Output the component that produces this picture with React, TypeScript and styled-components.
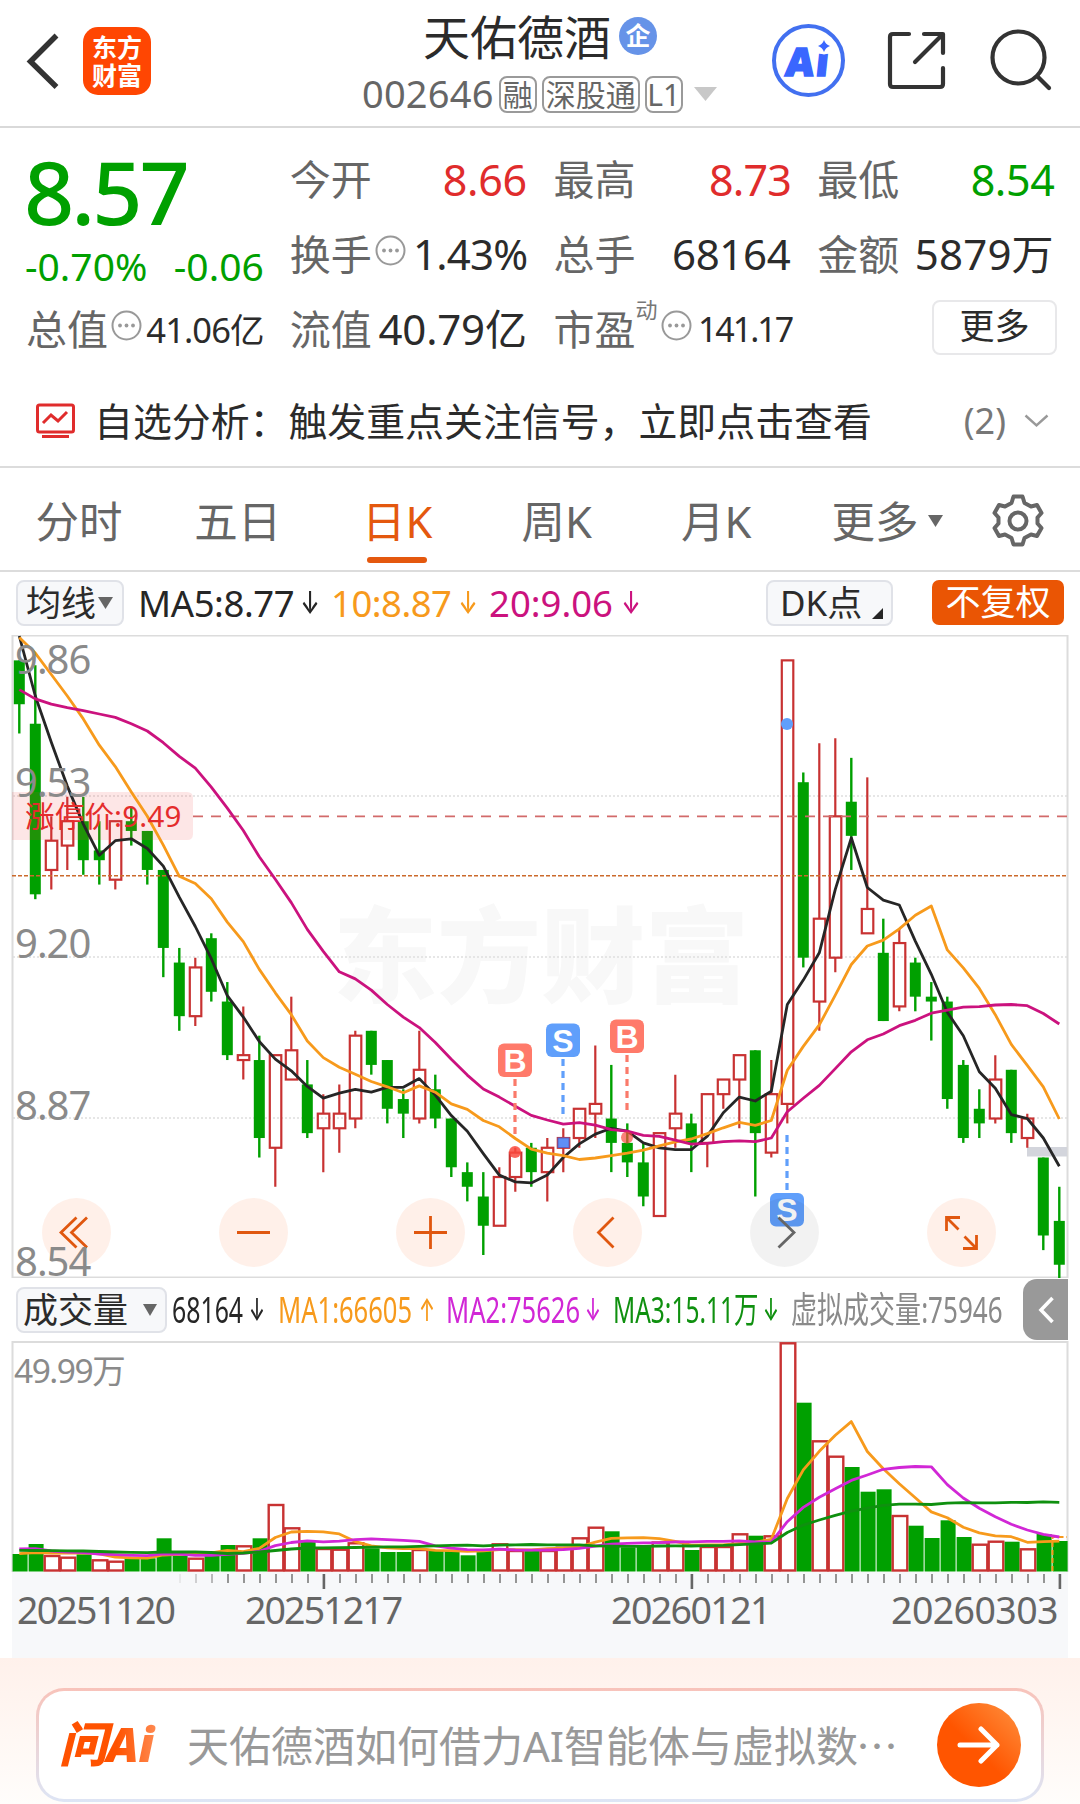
import React from "react";
import styled, { createGlobalStyle } from "styled-components";

const FONT = `"Noto Sans", "Noto Sans CJK SC", sans-serif`;
const UP = "#c83232";
const DOWN = "#00a000";
const ORANGE = "#f79a1c";

const GlobalStyle = createGlobalStyle`
  * { box-sizing: border-box; }
  body { margin: 0; background: #fff; font-family: ${FONT}; color: #2b2b2b; }
`;

const Page = styled.div`
  width: 1080px;
  height: 1804px;
  overflow: hidden;
  display: flex;
  flex-direction: column;
  background: #fff;
`;

type TextProps = { $size: number; $color?: string; $ls?: number; $weight?: number };
const Text = styled.span<TextProps>`
  font-size: ${(p) => p.$size}px;
  line-height: 1.2;
  color: ${(p) => p.$color ?? "#2b2b2b"};
  letter-spacing: ${(p) => p.$ls ?? 0}px;
  margin-right: ${(p) => p.$ls ?? 0}px;
  font-weight: ${(p) => p.$weight ?? 400};
  white-space: nowrap;
`;

/* ---------- header ---------- */
const Header = styled.header`
  height: 128px;
  flex: none;
  display: flex;
  border-bottom: 2px solid #d9d9d9;
`;
const HeaderLeft = styled.div`
  width: 362px;
  height: 121px;
  padding-left: 25px;
  display: flex;
  align-items: center;
  gap: 22px;
`;
const AppLogo = styled.div`
  width: 68px;
  height: 68px;
  border-radius: 15px;
  background: #ff4602;
  color: #fff;
  font-size: 25px;
  font-weight: 700;
  line-height: 28px;
  display: flex;
  flex-direction: column;
  align-items: center;
  justify-content: center;
`;
const HeaderCenter = styled.div`
  width: 356px;
  display: flex;
  flex-direction: column;
  align-items: center;
`;
const TitleRow = styled.div`
  height: 74px;
  display: flex;
  align-items: center;
  gap: 8px;
`;
const Badge = styled.div`
  width: 38px;
  height: 38px;
  margin-top: -2px;
  border-radius: 50%;
  background: #6693e8;
  color: #fff;
  font-size: 25px;
  font-weight: 700;
  line-height: 36px;
  text-align: center;
`;
const CodeRow = styled.div`
  height: 40px;
  width: 100%;
  display: flex;
  align-items: center;
  gap: 5px;
`;
const Tag = styled.div<{ $w: number }>`
  width: ${(p) => p.$w}px;
  height: 37px;
  border: 2px solid #9a9a9a;
  border-radius: 8px;
  display: flex;
  align-items: center;
  justify-content: center;
  font-size: 30px;
  line-height: 33px;
  color: #666;
`;
const HeaderRight = styled.div`
  flex: 1;
  display: flex;
  align-items: center;
  height: 121px;
  padding-left: 54px;
`;
const AiRing = styled.div`
  position: relative;
  width: 73px;
  height: 73px;
  border: 4px solid #4270f0;
  border-radius: 50%;
  display: flex;
  align-items: center;
  justify-content: center;
  font-size: 39px;
  font-weight: 900;
  letter-spacing: 2px;
  line-height: 60px;
  color: #3a66ff;
  -webkit-text-stroke: 1.5px #3a66ff;
`;
const AiWord = styled.span`
  transform: skewX(-6deg);
`;
const AiStar = styled.svg`
  position: absolute;
  left: 39px;
  top: 9px;
`;

/* ---------- quote ---------- */
const Quote = styled.section`
  height: 239px;
  flex: none;
  padding: 14px 26px 0;
  display: grid;
  grid-template-columns: repeat(4, 1fr);
  grid-template-rows: repeat(3, 75px);
  column-gap: 27px;
`;
const PriceBlock = styled.div`
  grid-row: span 2;
  display: flex;
  flex-direction: column;
`;
const Price = styled.div`
  height: 100px;
  margin-left: -2px;
  font-size: 88px;
  font-weight: 500;
  letter-spacing: -3px;
  line-height: 98px;
  color: ${DOWN};
`;
const Change = styled.div`
  height: 48px;
  margin: 0 -1px;
  display: flex;
  justify-content: space-between;
  align-items: center;
`;
const Cell = styled.div`
  display: flex;
  align-items: center;
  justify-content: space-between;
`;
const CellLabel = styled.div`
  display: flex;
  align-items: center;
`;
const InfoIcon = styled.svg`
  margin: -9px 0 0 3px;
`;
const Sup = styled.span`
  font-size: 22px;
  color: #777;
  width: 22px;
  height: 64px;
  line-height: 22px;
  text-align: right;
`;
const MoreCell = styled.div`
  display: flex;
  align-items: center;
  justify-content: flex-end;
`;
const MoreButton = styled.button`
  width: 125px;
  height: 55px;
  margin: -4px -3px 0 0;
  padding: 0 0 4px;
  border: 2px solid #e8e8ea;
  border-radius: 8px;
  background: #fff;
  font: 35px/44px ${FONT};
  color: #2b2b2b;
`;

/* ---------- analysis alert ---------- */
const Alert = styled.section`
  height: 101px;
  flex: none;
  padding: 9px 31px 0 36px;
  border-bottom: 2px solid #dcdcdc;
  display: flex;
  align-items: center;
`;
const AlertText = styled.div`
  flex: 1;
  margin-left: 18px;
  font-size: 38.9px;
  line-height: 50px;
  white-space: nowrap;
`;

/* ---------- tabs ---------- */
const Tabs = styled.nav`
  height: 104px;
  flex: none;
  display: flex;
  border-bottom: 2px solid #dcdcdc;
`;
const Tab = styled.div<{ $active?: boolean; $w?: number }>`
  width: ${(p) => p.$w ?? 159.5}px;
  padding-top: 26px;
  display: flex;
  flex-direction: column;
  align-items: center;
  font-size: 43.5px;
  line-height: 54px;
  color: ${(p) => (p.$active ? "#e4580e" : "#666")};
`;
const TabLabel = styled.div`
  display: flex;
  align-items: center;
  gap: 9px;
`;
const TabBar = styled.div`
  width: 60px;
  height: 6px;
  margin-top: 9px;
  border-radius: 3px;
  background: #e4580e;
`;

/* ---------- indicator row ---------- */
const MaRow = styled.div`
  height: 63px;
  flex: none;
  padding: 0 16px 2px;
  display: flex;
  align-items: center;
`;
const Chip = styled.div<{ $w: number; $pl?: number }>`
  width: ${(p) => p.$w}px;
  height: 46px;
  padding-left: ${(p) => p.$pl ?? 8}px;
  border: 2px solid #e0e2e8;
  border-radius: 8px;
  background: #f7f8fa;
  display: flex;
  align-items: center;
  font-size: 35px;
  line-height: 42px;
  white-space: nowrap;
`;
const Gap = styled.span<{ $w: number }>`
  width: ${(p) => p.$w}px;
`;
const Corner = styled.svg`
  align-self: flex-end;
  margin: 0 0 5px 10px;
`;
const Ma = styled.div<{ $color: string; $w: number; $ml: number; $ls?: number }>`
  width: ${(p) => p.$w}px;
  margin-left: ${(p) => p.$ml}px;
  display: flex;
  align-items: center;
  justify-content: space-between;
  font-size: 36.5px;
  line-height: 46px;
  letter-spacing: ${(p) => p.$ls ?? 0}px;
  color: ${(p) => p.$color};
  white-space: nowrap;
`;
const Arrow = styled.span<{ $sx?: number }>`
  width: 14px;
  display: flex;
  justify-content: center;
  font: 500 31px/46px "Inter", "DejaVu Sans", sans-serif;
  letter-spacing: 0;
  transform: scaleX(${(p) => p.$sx ?? 0.72});
`;
const Spacer = styled.div`
  flex: 1;
`;
const Adjust = styled.div`
  width: 132px;
  height: 45px;
  margin-left: 39px;
  border-radius: 7px;
  background: #ea5504;
  color: #fff;
  font-size: 35px;
  line-height: 43px;
  text-align: center;
`;

const Chart = styled.svg`
  display: block;
  flex: none;
`;

/* ---------- volume header ---------- */
const VolRow = styled.div`
  height: 63px;
  flex: none;
  padding: 0 12px 0 16px;
  display: flex;
  align-items: center;
`;
const VolItem = styled.div<{ $color: string; $w: number; $ml: number }>`
  width: ${(p) => p.$w}px;
  margin-left: ${(p) => p.$ml}px;
  display: flex;
  justify-content: space-between;
  align-items: center;
  color: ${(p) => p.$color};
`;
const Condensed = styled.span<{ $sx: number }>`
  display: block;
  width: 0;
  font-size: 36px;
  line-height: 46px;
  white-space: nowrap;
  transform: scaleX(${(p) => p.$sx});
  transform-origin: left center;
`;
const Handle = styled.div`
  width: 45px;
  height: 61px;
  border-radius: 14px 0 0 14px;
  background: #999;
  display: flex;
  align-items: center;
  justify-content: center;
`;

/* ---------- time axis ---------- */
const Axis = styled.div`
  height: 86px;
  flex: none;
  margin: 0 12px;
  background: #f7f8fa;
`;
const Dates = styled.div`
  display: flex;
  padding: 0 8px 0 5px;
  margin-top: -9px;
`;
const DateText = styled.span<{ $ml: number; $w: number; $ls: number }>`
  width: ${(p) => p.$w}px;
  margin-left: ${(p) => p.$ml}px;
  font-size: 37.5px;
  line-height: 46px;
  letter-spacing: ${(p) => p.$ls}px;
  color: #666;
`;

/* ---------- ask bar ---------- */
const AskArea = styled.footer`
  flex: 1;
  padding: 30px 36px 0;
  background: linear-gradient(#fff1eb, #fffdfb);
`;
const AskCard = styled.div`
  height: 114px;
  border: 3px solid transparent;
  border-radius: 28px;
  background: linear-gradient(#fff, #fff) padding-box, linear-gradient(#f8c3ba, #dde5f5) border-box;
  padding: 0 20px;
  display: flex;
  align-items: center;
`;
const AskLogo = styled.div`
  width: 128px;
  margin-top: -2px;
  font-size: 48px;
  font-weight: 900;
  font-style: italic;
  letter-spacing: -0.5px;
  line-height: 60px;
  white-space: nowrap;
  color: transparent;
  background: linear-gradient(90deg, #ff5200 45%, #ff8d55 78%);
  background-clip: text;
  -webkit-background-clip: text;
`;
const AskText = styled.div`
  flex: 1;
  font-size: 42px;
  line-height: 56px;
  color: #999;
  white-space: nowrap;
`;
const Dots = styled.span`
  display: inline-block;
  margin-left: -2px;
  font-family: "Noto Sans CJK SC", sans-serif;
`;
const Go = styled.div`
  width: 84px;
  height: 84px;
  border-radius: 50%;
  background: linear-gradient(45deg, #ff5500 45%, #ff9240);
  display: flex;
  align-items: center;
  justify-content: center;
`;

/* ---------- data ---------- */
// [kind, body top, body bottom, high, low] in cents below the 9.86 ceiling; R closes at the top, G at the bottom
type Candle = ["R" | "G", number, number, number, number];
const candles: Candle[] = [
  ["G", 5, 14, 5, 20], ["G", 18, 53, 6, 54], ["R", 42, 48, 37, 52], ["R", 38, 43, 33, 48], ["G", 38, 46, 33, 49],
  ["G", 44, 46, 38, 51], ["R", 38, 50, 38, 52], ["G", 38, 40, 35, 43], ["G", 40, 48, 40, 51], ["G", 48, 64, 48, 70],
  ["G", 67, 78, 64, 81], ["R", 68, 78, 66, 80], ["G", 62, 73, 61, 75], ["G", 75, 86, 71, 87], ["R", 86, 87, 76, 91],
  ["G", 87, 103, 82, 107], ["R", 86, 105, 86, 113], ["R", 85, 91, 74, 91], ["G", 92, 102, 87, 103], ["R", 98, 101, 94, 110],
  ["R", 98, 101, 92, 106], ["R", 82, 99, 81, 101], ["G", 81, 88, 81, 90], ["G", 87, 97, 87, 100], ["G", 95, 98, 93, 103],
  ["R", 89, 99, 81, 100], ["G", 93, 99, 90, 101], ["G", 99, 109, 99, 111], ["G", 110, 113, 108, 116], ["G", 115, 121, 110, 127],
  ["R", 111, 121, 109, 121], ["R", 106, 111, 105, 114], ["G", 105, 110, 104, 113], ["R", 105, 110, 103, 116], ["R", 103, 105, 101, 110],
  ["R", 97, 103, 97, 105], ["R", 96, 98, 84, 103], ["G", 99, 104, 88, 110], ["G", 104, 108, 100, 111], ["G", 108, 115, 104, 117],
  ["R", 102, 119, 102, 119], ["R", 98, 101, 90, 105], ["G", 100, 104, 98, 110], ["R", 94, 104, 94, 109], ["R", 91, 94, 91, 97],
  ["R", 86, 91, 86, 101], ["G", 85, 102, 85, 115], ["R", 94, 106, 87, 107], ["R", 5, 96, 5, 100], ["G", 30, 66, 28, 68],
  ["R", 58, 75, 22, 81], ["R", 37, 66, 21, 69], ["G", 34, 41, 25, 48], ["R", 56, 61, 29, 61], ["G", 65, 79, 58, 79],
  ["R", 63, 76, 60, 77], ["G", 67, 74, 66, 77], ["G", 74, 75, 71, 83], ["G", 75, 95, 74, 97], ["G", 88, 103, 87, 104],
  ["G", 97, 100, 93, 103], ["R", 91, 99, 86, 100], ["G", 89, 102, 89, 104], ["R", 99, 103, 98, 105], ["G", 107, 123, 107, 126],
  ["G", 120, 129, 113, 132],
];
// volume bar heights in chart units
const volumes = [
  17, 27, 16, 14.3, 16.7, 11.7, 10.3, 12.7, 12.7, 32.7, 15.3, 13.3, 16, 26, 25.7, 32.7, 67, 43.7, 29.3, 23,
  22.3, 28.7, 22.7, 19, 19, 22, 21, 21, 15.7, 21, 27.7, 21, 20.7, 21, 24.3, 33.7, 44.3, 39.7, 23.7, 25,
  29.5, 30, 21, 25, 25, 37.7, 35.3, 35.7, 228.7, 168.3, 130.7, 115.3, 104, 79.3, 81.7, 56, 45.3, 33, 50.7, 34,
  27.3, 30.3, 29.3, 22.7, 37, 30,
];
// days whose volume bar is drawn hollow red
const volumeUp = new Set([2, 3, 5, 6, 11, 14, 16, 17, 19, 20, 21, 25, 30, 31, 33, 34, 35, 36, 40, 41, 43, 44, 45, 47, 48, 50, 51, 55, 60, 61, 63]);

const average = (values: number[], n: number, seed: number[]) =>
  values.map((_, i) => {
    if (i < n - 1) return seed[i];
    let sum = 0;
    for (let k = i - n + 1; k <= i; k++) sum += values[k];
    return sum / n;
  });

const closes = candles.map(([kind, top, bottom]) => (kind === "R" ? top : bottom));
const ma5 = average(closes, 5, [0, 12.3, 21.8, 30.8]);
const ma10 = average(closes, 10, [0.3, 3.5, 7.9, 12.3, 17, 22.4, 26.8, 32, 37]);
const ma20 = average(closes, 20, [11, 12.9, 14, 14.7, 15.3, 16, 16.7, 18, 19.5, 21.9, 24.7, 27.1, 31, 35.3, 39.9, 45.3, 49.9, 54.7, 60.2]);
const vma5 = average(volumes, 5, [17.3, 18.5, 18, 17.8]);
const vma10 = average(volumes, 10, [22, 22.3, 20, 19, 18.5, 17, 16.3, 15.7, 15.3]);
const vma20 = average(volumes, 20, [20.7, 20.5, 20.3, 20.2, 20, 19.5, 19, 18.7, 18.3, 19, 19, 19, 18.5, 17.5, 18, 19, 20.5, 22, 23]);

const cx = (i: number) => 19.3 + 16 * i;
const py = (cents: number) => 1 + cents * 4.874;
const path = (values: number[], y: (v: number) => number) =>
  values.map((v, i) => `${i ? "L" : "M"}${cx(i).toFixed(1)} ${y(v).toFixed(1)}`).join("");

const Down = ({ w, h, color }: { w: number; h: number; color: string }) => (
  <svg width={w} height={h} viewBox="0 0 10 10" preserveAspectRatio="none">
    <path d="M0 0h10L5 10z" fill={color} />
  </svg>
);

const Info = () => (
  <InfoIcon width="31" height="31" viewBox="0 0 31 31">
    <circle cx="15.500" cy="15.500" r="14" fill="none" stroke="#999" strokeWidth="2" />
    <g fill="#999">
      <circle cx="9" cy="15.500" r="1.900" />
      <circle cx="15.500" cy="15.500" r="1.900" />
      <circle cx="22" cy="15.500" r="1.900" />
    </g>
  </InfoIcon>
);

const Signal = ({ x, y, kind }: { x: number; y: number; kind: "B" | "S" }) => (
  <g>
    <rect x={x - 17} y={y} width="34" height="33.500" rx="6" fill={kind === "B" ? "#ff7a6a" : "#609ffb"} />
    <text x={x} y={y + 28} textAnchor="middle" fontFamily="Liberation Sans, sans-serif" fontWeight="700" fontSize="32" fill="#fff">
      {kind}
    </text>
  </g>
);

const tools = [
  { x: 76.5, d: "M76.5 582.5L61 597.5l15.5 15M87 582.5L71.5 597.5l15.5 15" },
  { x: 253.5, d: "M237 597.5h33" },
  { x: 430.5, d: "M414 597.5h33M430.5 581v33" },
  { x: 607.5, d: "M613.5 582.5L598.5 597.5l15 15" },
  { x: 784.5, d: "M778.5 582.5l15.5 15l-15.5 15", muted: true },
  { x: 961.5, d: "M946.5 596v-13.5h13.5M946.5 582.5l12 12M964.5 601.5l12 12M976.5 600v13.5h-13.5" },
];

const PriceChart = () => (
  <Chart width="1080" height="643" viewBox="0 0 1080 643">
    <text x="541" y="360" textAnchor="middle" fontFamily="Noto Sans CJK SC, sans-serif" fontWeight="900" fontSize="104" fill="#f8f8f8">
      东方财富
    </text>
    <g stroke="#dedede" strokeWidth="1.500" strokeDasharray="2 2">
      <path d="M13 161H1067M13 322H1067M13 483H1067" />
    </g>
    <rect x="12.500" y="0.500" width="1055" height="642" fill="none" stroke="#dcdcdc" strokeWidth="2" />
    <rect x="1027" y="512" width="40" height="9.500" fill="#d3d5dc" />
    {candles.map(([kind, top, bottom, high, low], i) => {
      const x = cx(i);
      if (kind === "G")
        return (
          <g key={i} fill={DOWN}>
            <rect x={x - 1.2} y={py(high)} width="2.400" height={py(low) - py(high)} />
            <rect x={x - 5.5} y={py(top)} width="11" height={py(bottom) - py(top)} />
          </g>
        );
      return (
        <g key={i} stroke={UP} strokeWidth="2.200" fill="none">
          <path d={`M${x} ${py(high)}V${py(top)}M${x} ${py(bottom)}V${py(low)}`} />
          <rect x={x - 5.5} y={py(top)} width="11.500" height={py(bottom) - py(top)} />
        </g>
      );
    })}
    <path d="M12 157h175q6 0 6 6v36q0 6-6 6H12z" fill="#f03c3c" fillOpacity="0.130" />
    <path d="M193 181.300H1067" stroke="#d26a6a" strokeWidth="1.800" strokeDasharray="10 8" />
    <path d="M12 240.800H1067" stroke="#cb6a2c" strokeWidth="1.500" strokeDasharray="4 2" />
    <g fill="none" strokeWidth="2.800" strokeLinejoin="round">
      <path d={path(ma5, py)} stroke="#262626" />
      <path d={path(ma10, py)} stroke={ORANGE} />
      <path d={path(ma20, py)} stroke="#cb127e" />
    </g>
    <text x="25" y="192" fontFamily={FONT} fontSize="29.500" letterSpacing="0.200" fill="#e42c2c">涨停价:9.49</text>
    <g strokeWidth="3.200" strokeDasharray="7 5">
      <path d="M515 444v55M627 420v55" stroke="#fa7a6a" />
      <path d="M563 424v57M787 500v57" stroke="#609ffb" />
    </g>
    <circle cx="515" cy="517" r="6" fill="#fa4a3e" fillOpacity="0.850" />
    <circle cx="627" cy="502.500" r="6" fill="#fa4a3e" fillOpacity="0.700" />
    <rect x="558" y="503" width="11" height="9.500" fill="#5f8ff5" stroke="#5a5fc0" strokeWidth="1" />
    <circle cx="787" cy="89" r="6" fill="#609ffb" />
    <Signal x={515} y={408.5} kind="B" />
    <Signal x={563} y={388.5} kind="S" />
    <Signal x={627} y={384.5} kind="B" />
    <Signal x={787} y={558} kind="S" />
    {tools.map((t) => (
      <g key={t.x}>
        <circle cx={t.x} cy="597.500" r="34.500" fill={t.muted ? "#000" : "#ff7026"} fillOpacity={t.muted ? 0.05 : 0.1} />
        <path d={t.d} fill="none" stroke={t.muted ? "#666" : "#e0570f"} strokeWidth="2.800" />
      </g>
    ))}
    <g fontFamily={FONT} fontSize="40" letterSpacing="-1" fill="#8a8a8a">
      <text x="15" y="39">9.86</text>
      <text x="15" y="162">9.53</text>
      <text x="15" y="323">9.20</text>
      <text x="15" y="484.500">8.87</text>
      <text x="15" y="641">8.54</text>
    </g>
  </Chart>
);

const vy = (v: number) => 230 - v;

const VolumeChart = () => (
  <Chart width="1080" height="231" viewBox="0 0 1080 231">
    <path d="M12.500 231V1H1067.500V231" fill="none" stroke="#dcdcdc" strokeWidth="2" />
    {volumes.map((v, i) =>
      volumeUp.has(i) ? (
        <rect key={i} x={12.7 + 16 * i} y={vy(v) + 1} width="14.600" height={v - 1.5} fill="#fff" stroke={UP} strokeWidth="2.400" />
      ) : (
        <rect key={i} x={12.6 + 16 * i} y={vy(v)} width="15" height={v + 0.5} fill={DOWN} />
      ),
    )}
    <path d="M1052.500 230V196H1067" fill="none" stroke={ORANGE} strokeWidth="2" strokeDasharray="5 3" />
    <g fill="none" strokeWidth="2.800" strokeLinejoin="round">
      <path d={path(vma5, vy)} stroke={ORANGE} />
      <path d={path(vma10, vy)} stroke="#d127d6" />
      <path d={path(vma20, vy)} stroke="#0f900f" />
    </g>
    <text x="14" y="41.500" fontFamily={FONT} fontSize="33.500" letterSpacing="-1.500" fill="#8a8a8a">49.99万</text>
  </Chart>
);

const Ticks = () => (
  <Chart width="1056" height="24" viewBox="0 0 1056 24">
    {Array.from({ length: 56 }, (_, k) => k + 10).map((i) => {
      const major = i === 19 || i === 42 || i === 65;
      return (
        <rect
          key={i}
          x={cx(i) - 12 - (major ? 0.7 : 0.2)}
          y="2"
          width={major ? 2.6 : 1.8}
          height={major ? 15 : 9}
          fill={major ? "#666" : "#8a8a8a"}
          fillOpacity={i < 13 ? 0.15 + (i - 10) * 0.25 : 1}
        />
      );
    })}
  </Chart>
);

const Label = ({ children, info, sup }: { children: string; info?: boolean; sup?: string }) => (
  <CellLabel>
    <Text $size={41} $color="#666">{children}</Text>
    {sup && <Sup>{sup}</Sup>}
    {info && <Info />}
  </CellLabel>
);

export default function App() {
  return (
    <Page>
      <GlobalStyle />
      <Header>
        <HeaderLeft>
          <svg width="36" height="60" viewBox="0 0 36 60">
            <path d="M31.500 4.500L5.500 30.500L31.500 56" fill="none" stroke="#333" strokeWidth="5.500" />
          </svg>
          <AppLogo>
            <span>东方</span>
            <span>财富</span>
          </AppLogo>
        </HeaderLeft>
        <HeaderCenter>
          <TitleRow>
            <Text $size={47}>天佑德酒</Text>
            <Badge>企</Badge>
          </TitleRow>
          <CodeRow>
            <Text $size={38} $color="#666" $ls={0.2}>002646</Text>
            <Tag $w={38}>融</Tag>
            <Tag $w={98}>深股通</Tag>
            <Tag $w={38}>L1</Tag>
            <Gap $w={1} />
            <Down w={23} h={14} color="#c8c8c8" />
          </CodeRow>
        </HeaderCenter>
        <HeaderRight>
          <AiRing>
            <AiWord>Ai</AiWord>
            <AiStar width="18" height="18" viewBox="0 0 18 18">
              <circle cx="9" cy="9" r="8.500" fill="#fff" />
              <path d="M9 3q1.500 4.500 6 6q-4.500 1.500-6 6q-1.500-4.500-6-6q4.500-1.500 6-6z" fill="#3a66ff" />
            </AiStar>
          </AiRing>
          <svg width="235" height="80" viewBox="0 0 235 80">
            <g fill="none" stroke="#333" strokeWidth="4.200" strokeLinecap="round" strokeLinejoin="round">
              <path d="M64 13H48q-3 0-3 3v47q0 3 3 3h47q3 0 3-3V47M79 13H98V32M97 14L70 41" />
              <circle cx="173.500" cy="36.500" r="26" />
              <path d="M192.500 55.500L204 67" />
            </g>
          </svg>
        </HeaderRight>
      </Header>

      <Quote>
        <PriceBlock>
          <Price>8.57</Price>
          <Change>
            <Text $size={39} $color={DOWN}>-0.70%</Text>
            <Text $size={39} $color={DOWN}>-0.06</Text>
          </Change>
        </PriceBlock>
        <Cell><Label>今开</Label><Text $size={43} $color="#e02c2c" $ls={-0.3}>8.66</Text></Cell>
        <Cell><Label>最高</Label><Text $size={43} $color="#e02c2c" $ls={-0.8}>8.73</Text></Cell>
        <Cell><Label>最低</Label><Text $size={43} $color={DOWN} $ls={-0.4}>8.54</Text></Cell>
        <Cell><Label info>换手</Label><Text $size={42} $ls={-0.8}>1.43%</Text></Cell>
        <Cell><Label>总手</Label><Text $size={42} $ls={-0.3}>68164</Text></Cell>
        <Cell><Label>金额</Label><Text $size={42} $ls={0.2}>5879万</Text></Cell>
        <Cell><Label info>总值</Label><Text $size={34.5} $ls={-0.9}>41.06亿</Text></Cell>
        <Cell><Label>流值</Label><Text $size={42} $ls={-0.2}>40.79亿</Text></Cell>
        <Cell><Label info sup="动">市盈</Label><Text $size={34} $ls={-2}>141.17</Text></Cell>
        <MoreCell><MoreButton>更多</MoreButton></MoreCell>
      </Quote>

      <Alert>
        <svg width="40" height="36" viewBox="0 0 40 36">
          <g fill="none" stroke="#e02c2c" strokeWidth="3">
            <rect x="1.500" y="2" width="36" height="27" rx="2" />
            <path d="M7 20l8-8l7 6l9-9M6 33.500h27" />
          </g>
        </svg>
        <AlertText>自选分析：触发重点关注信号，立即点击查看</AlertText>
        <Text $size={36} $color="#777">(2)</Text>
        <Gap $w={18} />
        <svg width="25" height="14" viewBox="0 0 25 14">
          <path d="M1.500 1.500l11 10l11-10" fill="none" stroke="#999" strokeWidth="2.400" />
        </svg>
      </Alert>

      <Tabs>
        <Tab $w={158}>分时</Tab>
        <Tab>五日</Tab>
        <Tab $active>日K<TabBar /></Tab>
        <Tab>周K</Tab>
        <Tab>月K</Tab>
        <Tab $w={182}>
          <TabLabel>更多<Down w={15} h={12} color="#666" /></TabLabel>
        </Tab>
        <Tab $w={80}>
          <svg width="54" height="54" viewBox="0 0 54 54">
            <g fill="none" stroke="#666" strokeWidth="4" strokeLinejoin="round">
              <path d="M22.500 2.500h9l2 6.500l6.500 3.500l6-1.500l4.500 8l-4 4.500v6l4 4.500l-4.500 8l-6-1.500l-6.500 3.500l-2 6.500h-9l-2-6.500l-6.500-3.500l-6 1.500l-4.500-8l4-4.500v-6l-4-4.500l4.500-8l6 1.500l6.500-3.500z" />
              <circle cx="27" cy="27" r="8.500" />
            </g>
          </svg>
        </Tab>
      </Tabs>

      <MaRow>
        <Chip $w={108}>均线<Gap $w={2} /><Down w={15} h={12} color="#666" /></Chip>
        <Ma $color="#262626" $w={179} $ml={14} $ls={-0.4}>MA5:8.77<Arrow>↓</Arrow></Ma>
        <Ma $color={ORANGE} $w={144} $ml={14} $ls={-0.5}>10:8.87<Arrow>↓</Arrow></Ma>
        <Ma $color="#cb127e" $w={149} $ml={14}>20:9.06<Arrow>↓</Arrow></Ma>
        <Spacer />
        <Chip $w={127}>
          <Gap $w={4} />DK点
          <Corner width="11" height="11" viewBox="0 0 11 11"><path d="M11 0v11H0z" fill="#262626" /></Corner>
        </Chip>
        <Adjust>不复权</Adjust>
      </MaRow>

      <PriceChart />

      <VolRow>
        <Chip $w={151} $pl={5}>成交量<Gap $w={15} /><Down w={14} h={12} color="#666" /></Chip>
        <VolItem $color="#262626" $w={92} $ml={5}><Condensed $sx={0.69}>68164</Condensed><Arrow $sx={0.6}>↓</Arrow></VolItem>
        <VolItem $color={ORANGE} $w={156} $ml={14}><Condensed $sx={0.71}>MA1:66605</Condensed><Arrow $sx={0.6}>↑</Arrow></VolItem>
        <VolItem $color="#d127d6" $w={154} $ml={12}><Condensed $sx={0.71}>MA2:75626</Condensed><Arrow $sx={0.6}>↓</Arrow></VolItem>
        <VolItem $color="#0f900f" $w={165} $ml={13}><Condensed $sx={0.68}>MA3:15.11万</Condensed><Arrow $sx={0.6}>↓</Arrow></VolItem>
        <VolItem $color="#8a8a8a" $w={212} $ml={13}><Condensed $sx={0.723}>虚拟成交量:75946</Condensed></VolItem>
        <Spacer />
        <Handle>
          <svg width="18" height="30" viewBox="0 0 18 30">
            <path d="M15.500 3L4 15l11.500 12" fill="none" stroke="#fff" strokeWidth="3.600" />
          </svg>
        </Handle>
      </VolRow>

      <VolumeChart />

      <Axis>
        <Ticks />
        <Dates>
          <DateText $ml={0} $w={160} $ls={-1.8}>20251120</DateText>
          <DateText $ml={69} $w={160} $ls={-1.9}>20251217</DateText>
          <DateText $ml={207} $w={160} $ls={-1.6}>20260121</DateText>
          <DateText $ml={121} $w={170} $ls={-0.6}>20260303</DateText>
        </Dates>
      </Axis>

      <AskArea>
        <AskCard>
          <AskLogo>问Ai</AskLogo>
          <AskText>天佑德酒如何借力AI智能体与虚拟数<Dots>⋯</Dots></AskText>
          <Go>
            <svg width="44" height="38" viewBox="0 0 44 38">
              <path d="M3 19h37M24 3l16 16l-16 16" fill="none" stroke="#fff" strokeWidth="5" strokeLinecap="round" strokeLinejoin="round" />
            </svg>
          </Go>
        </AskCard>
      </AskArea>
    </Page>
  );
}
